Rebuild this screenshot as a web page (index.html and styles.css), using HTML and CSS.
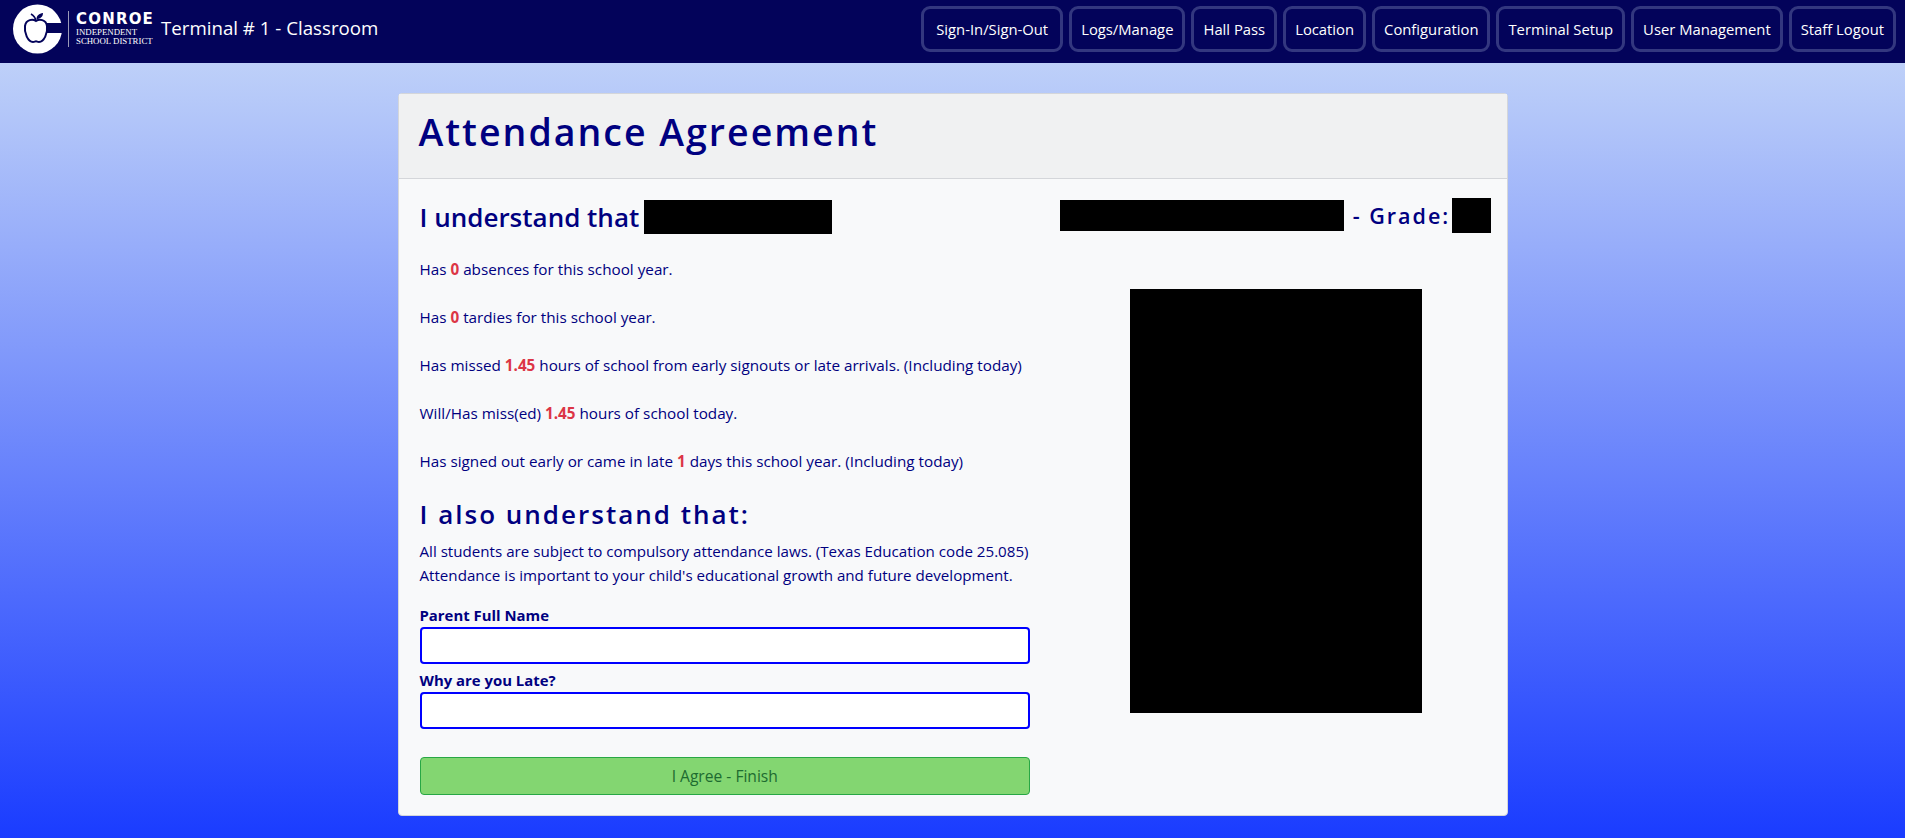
FILE: index.html
```html
<!DOCTYPE html>
<html lang="en">
  <head>
    <meta charset="UTF-8" />
    <title>Attendance Agreement</title>
    <link rel="stylesheet" href="styles.css">
  </head>
  <body>
    <nav class="top-nav">
      <div class="brand">
        <div class="logo">
          <svg class="logo-mark" width="52" height="52" viewBox="0 0 52 52">
            <circle cx="25.5" cy="26" r="24.5" fill="#fff" />
            <rect x="34" y="20" width="18" height="10" fill="#03035a" />
            <path d="M24 18c-3-2-10-2-11 5-1 7 3 16 8 16 1.500 0 2-.7 3-.7s1.500.7 3 .7c5 0 9-9 8-16-1-7-8-7-11-5z" fill="#fff" stroke="#03035a" stroke-width="2" />
            <path d="M19 11c2.500 1.500 4.500 4 5 7" fill="none" stroke="#03035a" stroke-width="1.600" />
            <path d="M24.500 16c0-3.500 2.500-5.500 6.500-6 0 3.500-2.500 6-6.500 6z" fill="#03035a" />
          </svg>
          <div class="logo-rule"></div>
          <div class="logo-text">
            <div class="logo-name">CONROE</div>
            <div class="logo-sub">INDEPENDENT</div>
            <div class="logo-sub">SCHOOL DISTRICT</div>
          </div>
        </div>
        <span class="terminal-name">Terminal # 1 - Classroom</span>
      </div>
      <div class="nav-buttons">
        <a class="nav-btn">Sign-In/Sign-Out</a>
        <a class="nav-btn">Logs/Manage</a>
        <a class="nav-btn">Hall Pass</a>
        <a class="nav-btn">Location</a>
        <a class="nav-btn">Configuration</a>
        <a class="nav-btn">Terminal Setup</a>
        <a class="nav-btn">User Management</a>
        <a class="nav-btn">Staff Logout</a>
      </div>
    </nav>

    <main class="page">
      <div class="card">
        <div class="card-header">
          <h1>Attendance Agreement</h1>
        </div>
        <div class="card-body">
          <div class="col-left">
            <h2 class="understand">I understand that <span class="redact redact-name"></span></h2>
            <p class="stat-line">Has <b>0</b> absences for this school year.</p>
            <p class="stat-line">Has <b>0</b> tardies for this school year.</p>
            <p class="stat-line">Has missed <b>1.45</b> hours of school from early signouts or late arrivals. (Including today)</p>
            <p class="stat-line">Will/Has miss(ed) <b>1.45</b> hours of school today.</p>
            <p class="stat-line">Has signed out early or came in late <b>1</b> days this school year. (Including today)</p>
            <h2 class="also">I also understand that:</h2>
            <p class="law-line">All students are subject to compulsory attendance laws. (Texas Education code 25.085)</p>
            <p class="law-line">Attendance is important to your child's educational growth and future development.</p>
            <form class="agree-form">
              <label for="parentName">Parent Full Name</label>
              <input id="parentName" type="text" />
              <label for="lateReason">Why are you Late?</label>
              <input id="lateReason" type="text" />
              <button type="button" class="agree-btn">I Agree - Finish</button>
            </form>
          </div>
          <div class="col-right">
            <div class="student-line">
              <span class="redact redact-student"></span>
              <span class="grade-text">- Grade:</span><span class="redact redact-grade"></span>
            </div>
            <div class="redact student-photo"></div>
          </div>
        </div>
      </div>
    </main>
  </body>
</html>
```

FILE: styles.css
```css
* {
  box-sizing: border-box;
}
html {
  height: 100%;
}
body {
  font-family: "Open Sans", "Noto Sans", sans-serif;
  font-size: 15.15px;
  margin: 0;
  min-height: 100vh;
  color: #000080;
  background: #1a3cff linear-gradient(to bottom, #cbdcf8 0%, #1a3cff 100%);
}
.top-nav {
  height: 63px;
  background-color: #03035a;
  display: flex;
  justify-content: space-between;
  align-items: center;
  padding: 0 9px 5px 13px;
}
.brand {
  display: flex;
  align-items: center;
}
.logo {
  display: flex;
  align-items: center;
  width: 148px;
}
.logo-mark {
  flex: none;
  margin-left: -1px;
}
.logo-rule {
  flex: none;
  width: 1px;
  height: 36px;
  margin: 0 7px 0 4px;
  background-color: #9a9ab8;
}
.logo-text {
  color: #fff;
  font-family: "Liberation Serif", serif;
  white-space: nowrap;
}
.logo-name {
  font-family: "DejaVu Sans", sans-serif;
  font-weight: 700;
  font-size: 15px;
  letter-spacing: 1.2px;
  line-height: 14px;
  margin-bottom: 2px;
}
.logo-sub {
  font-size: 8.8px;
  line-height: 9px;
}
.terminal-name {
  color: #fff;
  font-size: 18.7px;
  white-space: nowrap;
  margin-bottom: 4px;
}
.nav-buttons {
  display: flex;
  gap: 6px;
}
.nav-btn {
  height: 46px;
  display: flex;
  align-items: center;
  padding: 0 9px;
  border: 3px solid #33377f;
  border-radius: 9px;
  color: #fff;
  font-size: 14.8px;
  white-space: nowrap;
}
.nav-btn:first-child {
  padding: 0 12px;
}
.page {
  padding-top: 30px;
  display: flex;
  justify-content: center;
}
.card {
  width: 1110px;
  height: 723px;
  background-color: #f8f9fa;
  border: 1px solid #d4d6da;
  border-radius: 4px;
}
.card-header {
  height: 85px;
  padding: 0 20px 9px;
  display: flex;
  align-items: center;
  background-color: #f0f1f2;
  border-bottom: 1px solid #d4d6da;
}
h1 {
  margin: 0;
  font-size: 37.5px;
  font-weight: 600;
  letter-spacing: 2px;
}
.card-body {
  display: grid;
  grid-template-columns: 647px 461px;
}
.col-left {
  padding: 20px 0 0 21px;
  width: 631.5px;
}
h2 {
  margin: 0;
  font-weight: 600;
}
.understand {
  display: flex;
  align-items: center;
  font-size: 26px;
  height: 36px;
  white-space: pre;
}
.understand .redact-name {
  margin-left: -2px;
}
.stat-line {
  margin: 24px 0 0;
  font-size: 15.25px;
  line-height: 24px;
}
.stat-line:first-of-type {
  margin-top: 22px;
}
.stat-line b {
  color: #dc3545;
}
.also {
  font-size: 26px;
  letter-spacing: 2px;
  line-height: 36px;
  margin: 23px 0 7px;
}
.law-line {
  margin: 0;
  line-height: 24px;
}
.agree-form {
  margin-top: 16px;
  display: flex;
  flex-direction: column;
}
.agree-form label {
  font-weight: 700;
  font-size: 14.9px;
  line-height: 24px;
}
.agree-form input {
  height: 37px;
  margin-bottom: 4px;
  border: 2px solid #0000ff;
  border-radius: 4px;
  background-color: #fff;
}
.agree-btn {
  margin-top: 24px;
  height: 38px;
  border: 1px solid #28a745;
  border-radius: 4px;
  background-color: #83d671;
  color: #1d6b30;
  font-family: inherit;
  font-size: 15.6px;
}
.col-right {
  display: flex;
  flex-direction: column;
  align-items: center;
  padding-top: 19px;
  padding-left: 19px;
  padding-right: 20px;
}
.redact {
  display: block;
  background-color: #000;
}
.redact-name {
  width: 188px;
  height: 34px;
}
.student-line {
  display: flex;
  flex: none;
  align-items: center;
  height: 35px;
  font-size: 21.5px;
  font-weight: 600;
  letter-spacing: 2px;
  white-space: nowrap;
}
.redact-student {
  width: 284px;
  height: 31px;
  margin-right: 9px;
}
.redact-grade {
  width: 39px;
  height: 35px;
  margin-left: 2px;
}
.student-photo {
  width: 292px;
  height: 424px;
  margin-top: 56px;
}
```
